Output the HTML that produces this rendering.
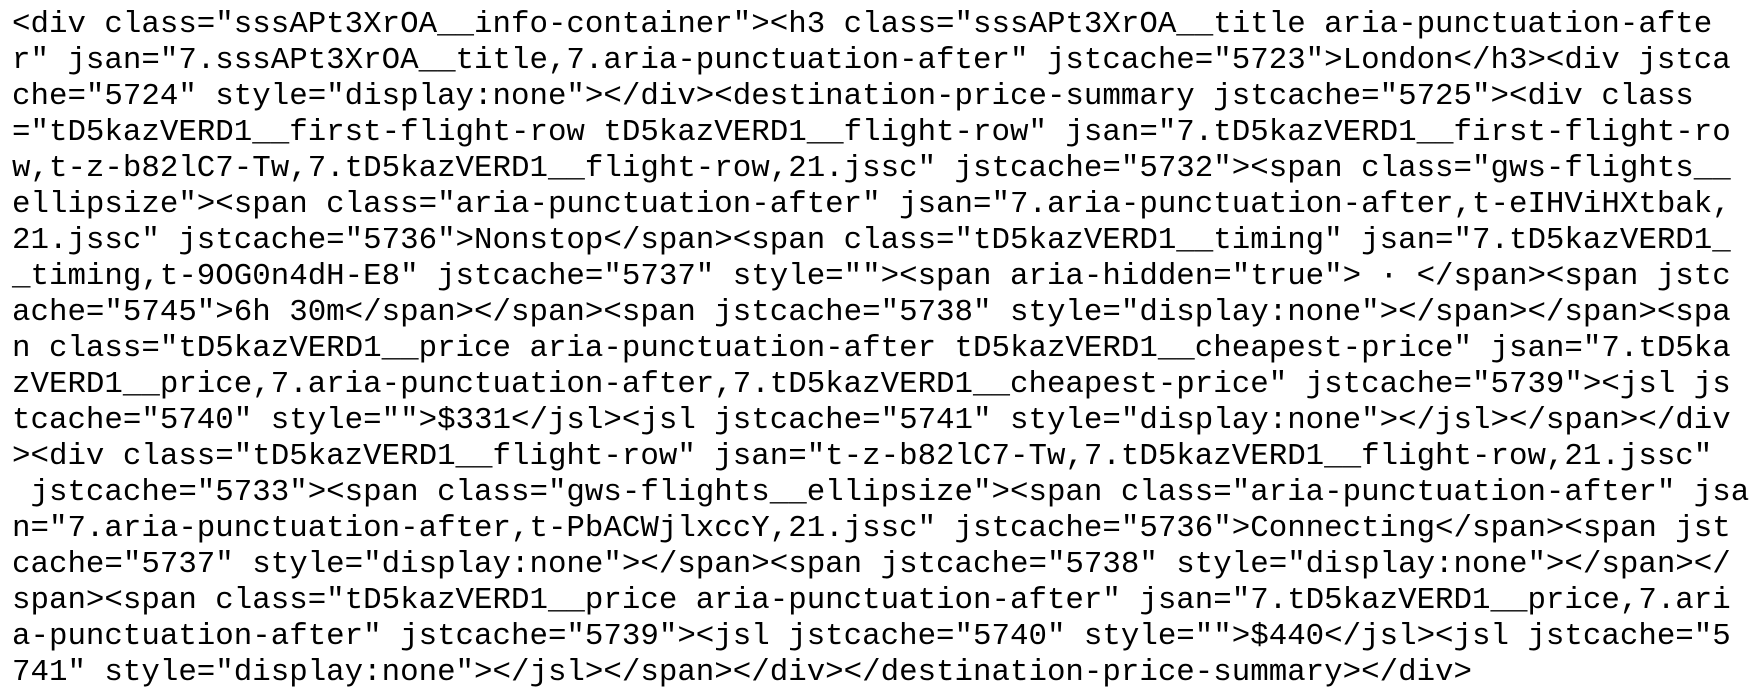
<!DOCTYPE html>
<html><head><meta charset="utf-8"><style>
html,body{margin:0;padding:0;background:#fff;width:1754px;height:700px;overflow:hidden}
.t{position:absolute;left:12px;top:7px;font-family:"Liberation Mono","Courier New",monospace;font-size:30.8px;line-height:36px;color:#000;white-space:pre;margin:0}
</style></head><body>
<pre class="t">&lt;div class="sssAPt3XrOA__info-container"&gt;&lt;h3 class="sssAPt3XrOA__title aria-punctuation-afte
r" jsan="7.sssAPt3XrOA__title,7.aria-punctuation-after" jstcache="5723"&gt;London&lt;/h3&gt;&lt;div jstca
che="5724" style="display:none"&gt;&lt;/div&gt;&lt;destination-price-summary jstcache="5725"&gt;&lt;div class
="tD5kazVERD1__first-flight-row tD5kazVERD1__flight-row" jsan="7.tD5kazVERD1__first-flight-ro
w,t-z-b82lC7-Tw,7.tD5kazVERD1__flight-row,21.jssc" jstcache="5732"&gt;&lt;span class="gws-flights__
ellipsize"&gt;&lt;span class="aria-punctuation-after" jsan="7.aria-punctuation-after,t-eIHViHXtbak,
21.jssc" jstcache="5736"&gt;Nonstop&lt;/span&gt;&lt;span class="tD5kazVERD1__timing" jsan="7.tD5kazVERD1_
_timing,t-9OG0n4dH-E8" jstcache="5737" style=""&gt;&lt;span aria-hidden="true"&gt; · &lt;/span&gt;&lt;span jstc
ache="5745"&gt;6h 30m&lt;/span&gt;&lt;/span&gt;&lt;span jstcache="5738" style="display:none"&gt;&lt;/span&gt;&lt;/span&gt;&lt;spa
n class="tD5kazVERD1__price aria-punctuation-after tD5kazVERD1__cheapest-price" jsan="7.tD5ka
zVERD1__price,7.aria-punctuation-after,7.tD5kazVERD1__cheapest-price" jstcache="5739"&gt;&lt;jsl js
tcache="5740" style=""&gt;$331&lt;/jsl&gt;&lt;jsl jstcache="5741" style="display:none"&gt;&lt;/jsl&gt;&lt;/span&gt;&lt;/div
&gt;&lt;div class="tD5kazVERD1__flight-row" jsan="t-z-b82lC7-Tw,7.tD5kazVERD1__flight-row,21.jssc"
 jstcache="5733"&gt;&lt;span class="gws-flights__ellipsize"&gt;&lt;span class="aria-punctuation-after" jsa
n="7.aria-punctuation-after,t-PbACWjlxccY,21.jssc" jstcache="5736"&gt;Connecting&lt;/span&gt;&lt;span jst
cache="5737" style="display:none"&gt;&lt;/span&gt;&lt;span jstcache="5738" style="display:none"&gt;&lt;/span&gt;&lt;/
span&gt;&lt;span class="tD5kazVERD1__price aria-punctuation-after" jsan="7.tD5kazVERD1__price,7.ari
a-punctuation-after" jstcache="5739"&gt;&lt;jsl jstcache="5740" style=""&gt;$440&lt;/jsl&gt;&lt;jsl jstcache="5
741" style="display:none"&gt;&lt;/jsl&gt;&lt;/span&gt;&lt;/div&gt;&lt;/destination-price-summary&gt;&lt;/div&gt;</pre>
</body></html>
